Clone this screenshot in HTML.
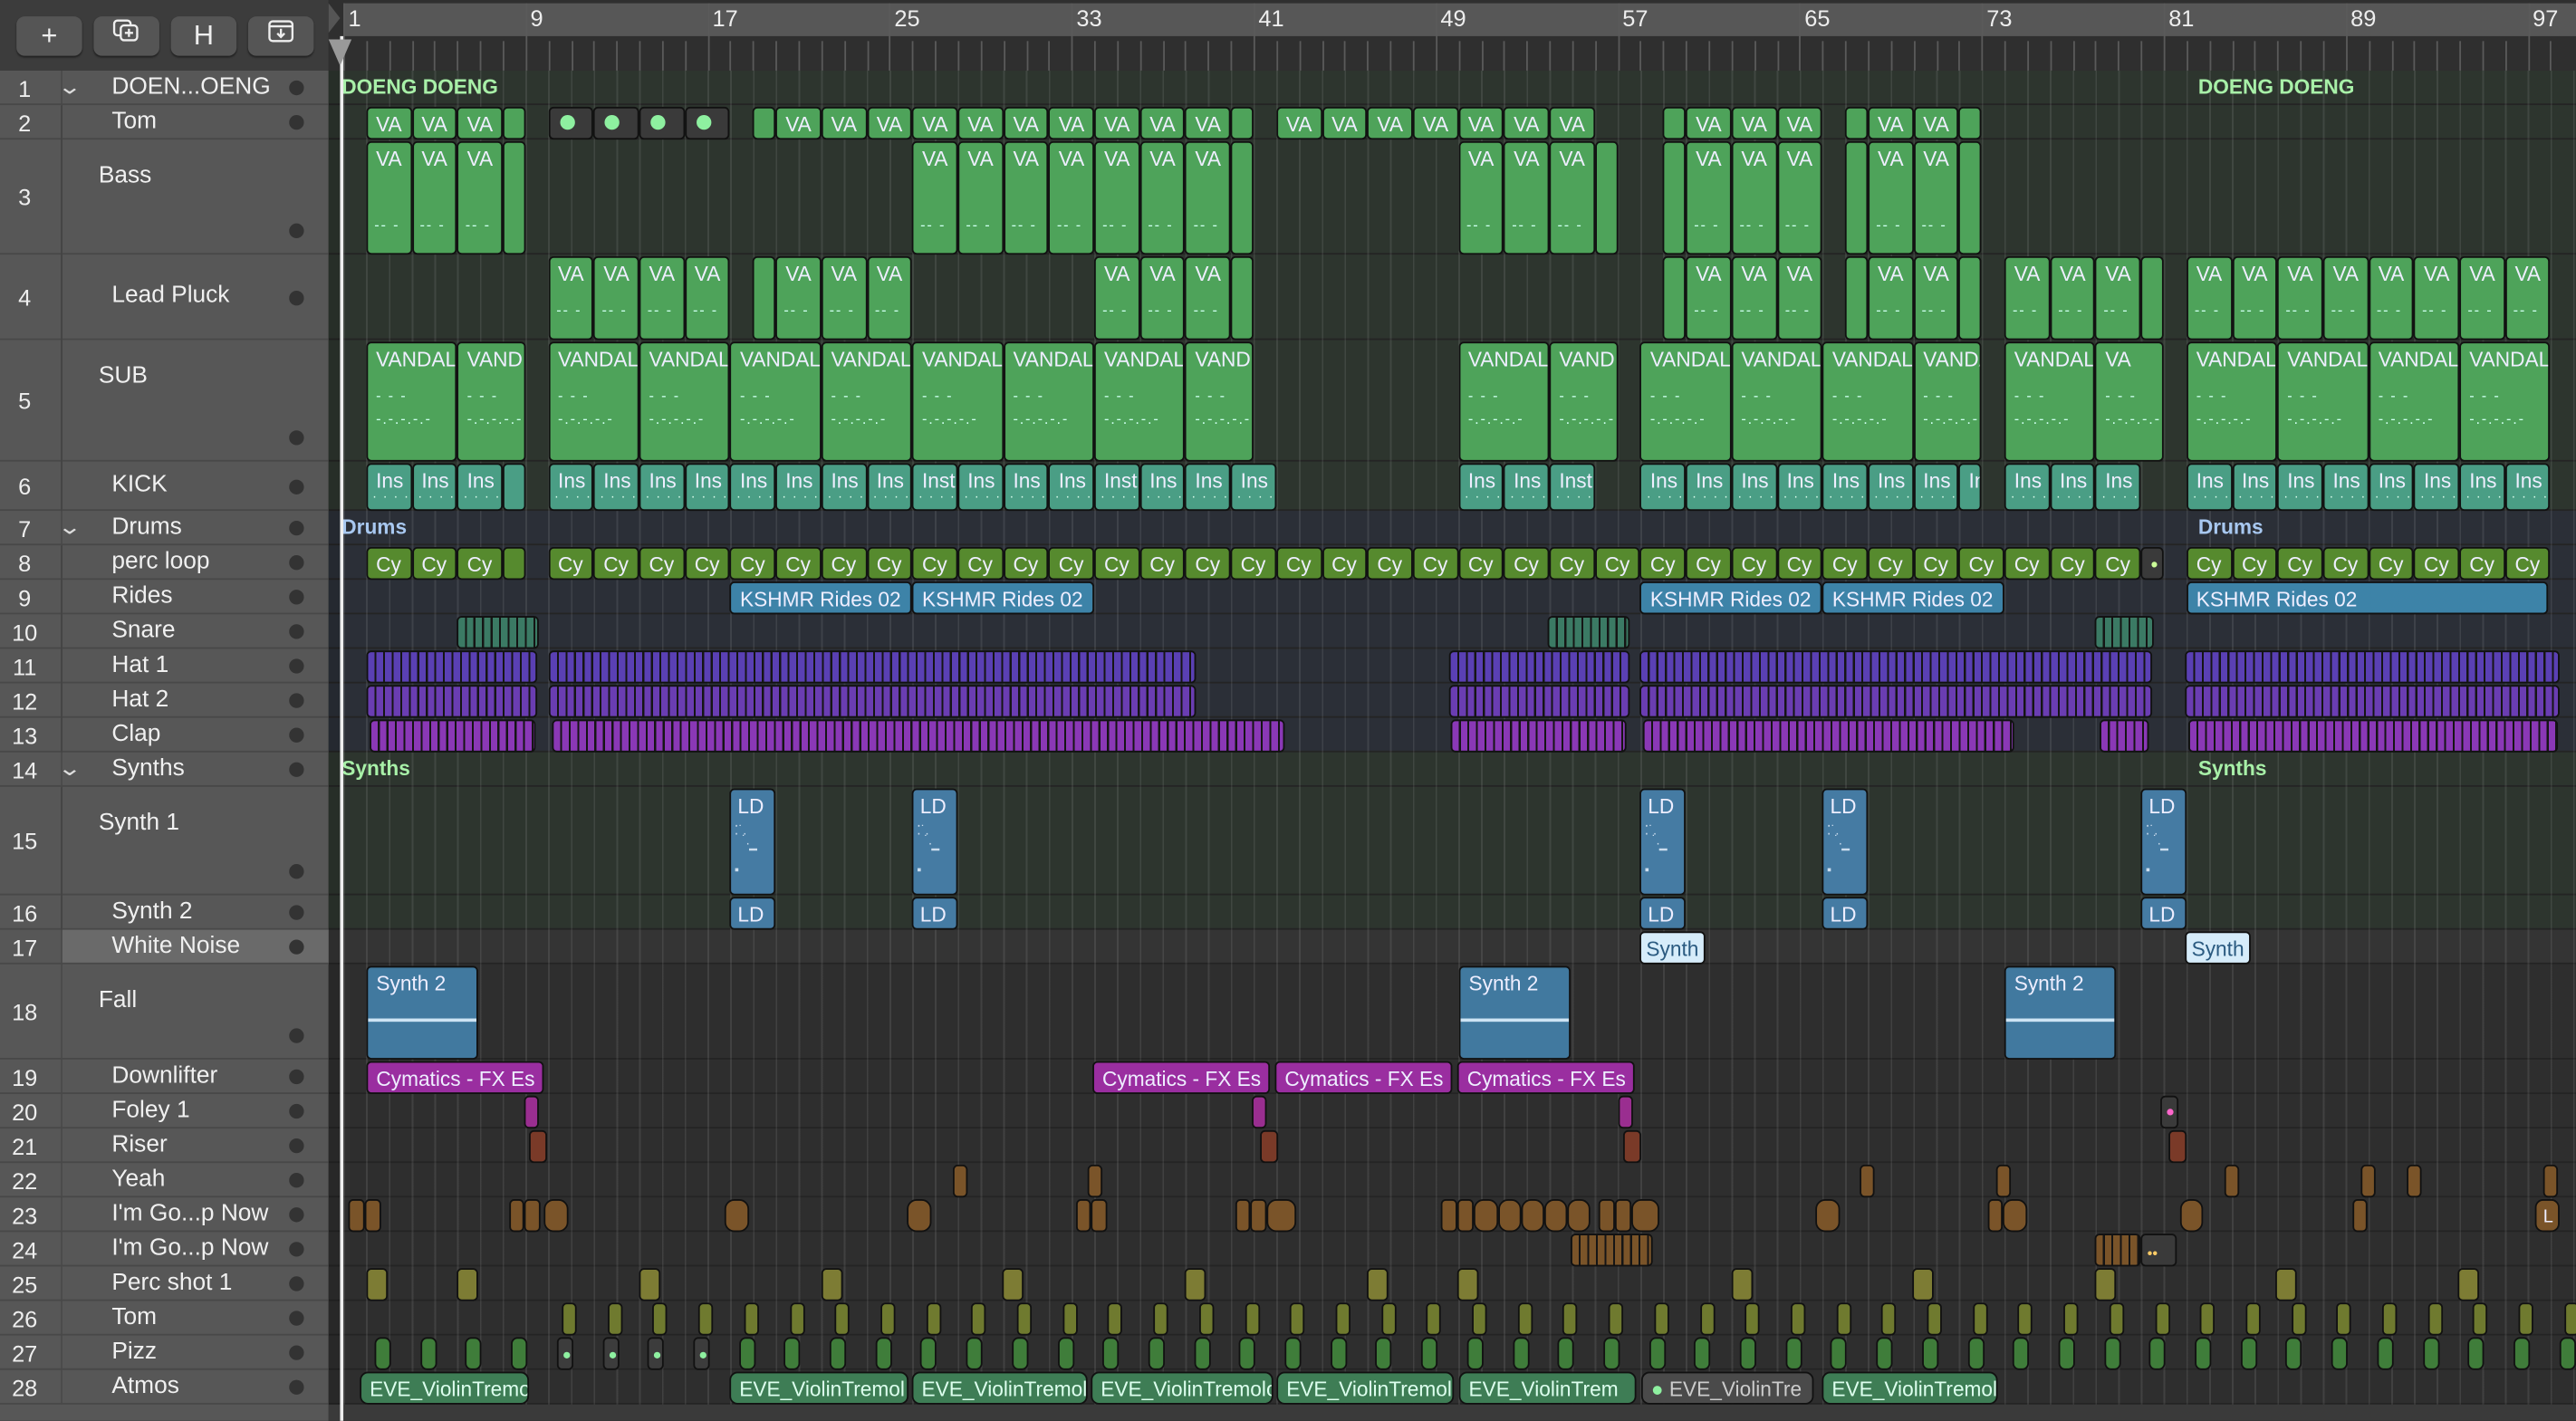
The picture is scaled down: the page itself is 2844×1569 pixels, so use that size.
<!DOCTYPE html>
<html><head><meta charset="utf-8">
<style>
html,body{margin:0;padding:0;background:#2c2c2c;width:2844px;height:1568px;overflow:hidden}
#s{position:absolute;left:0;top:0;width:1568px;height:865px;transform:scale(1.81378);transform-origin:0 0;background:#2c2c2c;font-family:"Liberation Sans",sans-serif;overflow:hidden}
.a{position:absolute;box-sizing:border-box}
.rg{position:absolute;box-sizing:border-box;border:1px solid #111;border-radius:3px;color:#eef;font-size:12.5px;line-height:14px;padding:3px 0 0 5px;overflow:hidden;white-space:nowrap}
.btn{position:absolute;top:10px;width:40px;height:24px;background:#555;border-radius:5px;box-shadow:0 1px 1px #222;color:#eee;text-align:center;font-size:17px;line-height:24px}
.num{position:absolute;left:0;width:30px;text-align:center;color:#eee;font-size:14px}
.nm{position:absolute;color:#f0f0f0;font-size:14.5px;white-space:nowrap}
.dot{position:absolute;left:176px;width:9px;height:9px;border-radius:50%;background:#333}
.gl{position:absolute;font-weight:bold;font-size:12.5px}
</style></head><body><div id="s"></div>
<script>
const S=document.getElementById('s');
const X=b=>209+(b-1)*13.85;
const rows=[null,[43,21],[64,21],[85,70],[155,52],[207,74],[281,30],[311,21],[332,21],[353,21],[374,21],[395,21],[416,21],[437,21],[458,21],[479,66],[545,21],[566,21],[587,58],[645,21],[666,21],[687,21],[708,21],[729,21],[750,21],[771,21],[792,21],[813,21],[834,21]];
function el(cls,st,html){const d=document.createElement('div');d.className=cls;d.style.cssText=st;if(html!==undefined)d.innerHTML=html;S.appendChild(d);return d;}
el('a','left:0;top:0;width:200px;height:43px;background:#3c3c3c');
el('btn','left:10px','+');
el('btn','left:57px','<svg width="18" height="16" viewBox="0 0 18 16"><rect x="1.5" y="1.5" width="10" height="9" rx="2" fill="none" stroke="#eee" stroke-width="1.3"/><rect x="5.5" y="4.5" width="10" height="9" rx="2" fill="#555" stroke="#eee" stroke-width="1.3"/><path d="M10.5 6.5v5M8 9h5" stroke="#eee" stroke-width="1.3"/></svg>');
el('btn','left:104px','H');
el('btn','left:151px','<svg width="18" height="16" viewBox="0 0 18 16"><rect x="2" y="2" width="14" height="12" rx="2" fill="none" stroke="#eee" stroke-width="1.3"/><path d="M2 5h14M9 6.5v5M6.8 9.3 9 11.5l2.2-2.2" fill="none" stroke="#eee" stroke-width="1.3"/></svg>');
el('a','left:200px;top:0;width:1368px;height:43px;background:#2f2f2f');
el('a','left:209px;top:2px;width:1359px;height:20px;background:#575757');
let rl='';
for(let b=1;b<=98;b++){const x=X(b)-200;rl+='<div class="a" style="left:'+x+'px;top:'+(((b-1)%8==0)?2:25)+'px;width:1px;height:'+(((b-1)%8==0)?41:18)+'px;background:#5a5a5a"></div>';}
el('a','left:200px;top:0;width:1368px;height:43px',rl);
[1,9,17,25,33,41,49,57,65,73,81,89,97].forEach(n=>el('a','left:'+(X(n)+3)+'px;top:3px;color:#eee;font-size:14px',String(n)));
el('a','left:200px;top:2px;width:0;height:0;border-top:9px solid transparent;border-bottom:9px solid transparent;border-left:7px solid #555');
el('a','left:0;top:43px;width:200px;height:822px;background:#575757');
el('a','left:37px;top:43px;width:1px;height:812px;background:#4a4a4a');
const tint={1:'#2d352e',2:'#2d352e',3:'#2d352e',4:'#2d352e',5:'#2d352e',6:'#2d352e',7:'#2b2f37',8:'#2b2f37',9:'#2b2f37',10:'#2b2f37',11:'#2b2f37',12:'#2b2f37',13:'#2b2f37',14:'#2d352e',15:'#2d352e',16:'#2d352e',17:'#343434'};
for(let i=1;i<=28;i++){const[t,h]=rows[i];el('a','left:200px;top:'+t+'px;width:1368px;height:'+h+'px;background:'+(tint[i]||'#2e2e2e')+';border-bottom:1px solid #242424');}
el('a','left:200px;top:855px;width:1368px;height:10px;background:#3a3a3a');
el('a','left:200px;top:43px;width:9px;height:812px;background:rgba(0,0,0,.12)');
el('a','left:'+X(1)+'px;top:43px;width:1359px;height:812px;background:repeating-linear-gradient(90deg,rgba(255,255,255,.09) 0 1px,transparent 1px 13.85px)');
const names={1:'DOEN...OENG',2:'Tom',3:'Bass',4:'Lead Pluck',5:'SUB',6:'KICK',7:'Drums',8:'perc loop',9:'Rides',10:'Snare',11:'Hat 1',12:'Hat 2',13:'Clap',14:'Synths',15:'Synth 1',16:'Synth 2',17:'White Noise',18:'Fall',19:'Downlifter',20:'Foley 1',21:'Riser',22:'Yeah',23:"I'm Go...p Now",24:"I'm Go...p Now",25:'Perc shot 1',26:'Tom',27:'Pizz',28:'Atmos'};
const tall={3:1,5:1,15:1,18:1};
for(let i=1;i<=28;i++){const[t,h]=rows[i];
 if(i==17)el('a','left:38px;top:'+t+'px;width:162px;height:'+h+'px;background:#6a6a6a');
 el('a','left:0;top:'+(t+h-1)+'px;width:200px;height:1px;background:#484848');
 el('num','top:'+(t+h/2-8)+'px',String(i));
 if(tall[i]){el('nm','left:60px;top:'+(t+14)+'px',names[i]);el('dot','top:'+(t+h-19)+'px');}
 else{el('nm','left:68px;top:'+(t+h/2-9)+'px',names[i]);el('dot','top:'+(t+h/2-4.5)+'px');}
 if(i==1||i==7||i==14)el('a','left:37px;top:'+(t+h/2-9)+'px;color:#ddd;font-size:13px;transform:scaleX(1.4)','&#8964;');
}
[[64,311],[332,458],[479,566]].forEach(([a,b])=>el('a','left:37px;top:'+a+'px;width:1px;height:'+(b-a)+'px;border-left:1px solid #444;border-top:1px solid #444;border-top-left-radius:8px;box-sizing:border-box'));
[['DOENG DOENG',1,'#a8f0a8'],['Drums',7,'#a8c8f0'],['Synths',14,'#a8f0a8']].forEach(([n,r,c])=>{const t=rows[r][0];el('gl','left:208px;top:'+(t+3)+'px;color:'+c,n);el('gl','left:1338px;top:'+(t+3)+'px;color:'+c,n);});
function P(r,x1,x2,bg,label,extra){const[t,h]=rows[r];return el('rg','left:'+x1+'px;top:'+(t+1)+'px;width:'+(x2-x1)+'px;height:'+(h-1)+'px;background:'+bg+';'+(extra||''),label||'');}
function B(r,b1,b2,bg,label,extra){return P(r,X(b1),X(b2),bg,label,extra);}
function C(r,b,n,len,bg,label,extra){for(let i=0;i<n;i++)B(r,b+i*len,b+(i+1)*len,bg,label,extra);}
const G='#4ea35a';
const dash='<div style="position:absolute;left:4px;bottom:10px;font-size:9px;color:#cfe;letter-spacing:1px">-- -</div>';
function CV(r,b,n,len,lab,ex){for(let i=0;i<n;i++)B(r,b+i*len,b+(i+1)*len,G,lab+(ex||''));}
CV(2,2,3,2,'VA');B(2,8,9,G);
[10,12,14,16].forEach(b=>B(2,b,b+2,'#3a3a3a','<div style="width:9px;height:9px;border-radius:50%;background:#8ef0a0;margin:1px 0 0 1px"></div>'));
B(2,19,20,G);CV(2,20,10,2,'VA');B(2,40,41,G);CV(2,42,7,2,'VA');B(2,59,60,G);CV(2,60,3,2,'VA');B(2,67,68,G);CV(2,68,2,2,'VA');B(2,72,73,G);
CV(3,2,3,2,'VA',dash);B(3,8,9,G);CV(3,26,7,2,'VA',dash);B(3,40,41,G);CV(3,50,3,2,'VA',dash);B(3,56,57,G);B(3,59,60,G);CV(3,60,3,2,'VA',dash);B(3,67,68,G);CV(3,68,2,2,'VA',dash);B(3,72,73,G);
CV(4,10,4,2,'VA',dash);B(4,19,20,G);CV(4,20,3,2,'VA',dash);CV(4,34,3,2,'VA',dash);B(4,40,41,G);B(4,59,60,G);CV(4,60,3,2,'VA',dash);B(4,67,68,G);CV(4,68,2,2,'VA',dash);B(4,72,73,G);CV(4,74,3,2,'VA',dash);B(4,80,81,G);CV(4,82,8,2,'VA',dash);
const vd='<div style="font-size:9px;color:#cfe;margin-top:8px;letter-spacing:1px">- - -<br>-.-.-.-.-</div>';
[[2,6,'VANDAL'],[6,9,'VAND'],[10,14,'VANDAL'],[14,18,'VANDAL'],[18,22,'VANDAL'],[22,26,'VANDAL'],[26,30,'VANDAL'],[30,34,'VANDAL'],[34,38,'VANDAL'],[38,41,'VAND'],[50,54,'VANDAL'],[54,57,'VAND'],[58,62,'VANDAL'],[62,66,'VANDAL'],[66,70,'VANDAL'],[70,73,'VANDA'],[74,78,'VANDAL'],[78,81,'VA'],[82,86,'VANDAL'],[86,90,'VANDAL'],[90,94,'VANDAL'],[94,98,'VANDALI']].forEach(([a,b,l])=>B(5,a,b,G,l+vd));
const T='#4a9e85';const idots='<div style="position:absolute;left:3px;bottom:2px;font-size:8px;color:#dfe;letter-spacing:1px">. . . .</div>';
C(6,2,3,2,T,'Ins'+idots);B(6,8,9,T);
for(let i=0;i<16;i++)B(6,10+i*2,12+i*2,T,(i==8||i==12?'Inst':'Ins')+idots);
C(6,50,2,2,T,'Ins'+idots);B(6,54,56,T,'Inst'+idots);C(6,58,7,2,T,'Ins'+idots);B(6,72,73,T,'In');C(6,74,3,2,T,'Ins'+idots);C(6,82,8,2,T,'Ins'+idots);
const O='#568a2e';C(8,2,3,2,O,'Cy');B(8,8,9,O);C(8,10,35,2,O,'Cy');B(8,80,81,'#3a3a3a','<span style="color:#cf9">•</span>');C(8,82,8,2,O,'Cy');
const KB='#3d83a8';[[18,26],[26,34],[58,66],[66,74],[82,97.9]].forEach(([a,b])=>B(9,a,b,KB,'KSHMR Rides 02'));
const st=c=>'repeating-linear-gradient(90deg,'+c+' 0 4px,#151515 4px 5.2px)';
[[278,328],[942,992],[1275,1311]].forEach(([a,b])=>P(10,a,b,st('#3b7a64')));
[[223,327],[334,728],[882,992],[998,1310],[1330,1558]].forEach(([a,b])=>{P(11,a,b,st('#5a40b4'));P(12,a,b,st('#6a3db2'));});
[[225,326],[336,782],[883,990],[1000,1226],[1278,1308],[1332,1557]].forEach(([a,b])=>P(13,a,b,st('#8a38b6')));
const LB='#457ba3';
const ldart='<div style="position:absolute;left:2px;top:22px;font-size:8px;line-height:6px;color:#cde">⁚˙.<br>&nbsp;&nbsp;˙.<br><span style="margin-left:9px">━</span><br><br>▪</div>';
[444,555,998,1109,1303].forEach(x=>{P(15,x,x+28,LB,'LD'+ldart,'padding-left:4px');P(16,x,x+28,LB,'LD','padding-left:4px');});
[998,1330].forEach(x=>P(17,x,x+40,'#d6ecfa','Synth','color:#2a5a80;padding-left:3px'));
[223,888,1220].forEach(x=>P(18,x,x+68,'#41799f','Synth 2<div style="position:absolute;left:0;right:0;top:31px;height:2px;background:#cde4f4"></div>'));
[[223,331],[665,773],[776,884],[887,995]].forEach(([a,b])=>P(19,a,b,'#9a2ea0','Cymatics - FX Es'));
[[319,328],[762,771],[985,994]].forEach(([a,b])=>P(20,a,b,'#9a2e90'));
P(20,1315,1326,'#3a3a3a','<div style="width:4px;height:4px;border-radius:50%;background:#f6c;margin:4px 0 0 -2px"></div>');
[[322,333],[767,778],[988,999],[1320,1331]].forEach(([a,b])=>P(21,a,b,'#7a3a28'));
const BR='#7a5429';
[580,662,1132,1215,1354,1437,1465,1548].forEach(x=>P(22,x,x+9,BR));
[[212,222],[222,232],[310,319],[319,329],[331,346],[441,456],[552,567],[655,664],[664,674],[752,761],[761,771],[771,789],[877,887],[887,897],[897,912],[912,926],[926,940],[940,954],[954,968],[973,983],[983,993],[993,1010],[1105,1120],[1210,1219],[1219,1234],[1327,1341],[1432,1441]].forEach(([a,b])=>P(23,a,b,BR,'',(b-a>12?'border-radius:6px;':'')));
P(23,1543,1558,BR,'L','padding:3px 0 0 4px;font-size:11px;border-radius:5px');
P(24,956,1006,st('#7a5429'));P(24,1275,1303,st('#7a5429'));P(24,1303,1325,'#3a3a3a','<span style="color:#fc6;font-size:9px">••</span>','padding-left:3px');
[223,278,389,500,610,721,832,887,1054,1164,1275,1385,1496].forEach(x=>P(25,x,x+13,'#7d7c34'));
for(let x=342;x<1562;x+=27.7)P(26,x,x+9,'#6f7a2f');
for(let i=0;i*27.7+228<1562;i++){const x=228+i*27.7;if(i>=4&&i<=7)P(27,x,x+10,'#3c3c3c','<div style="width:4px;height:4px;border-radius:50%;background:#8ef0a0;margin:5px 0 0 -2px"></div>');else P(27,x,x+10,'#3f7d3a','','border-radius:4px');}
const EV='#3e7d55';
[[219,322,'EVE_ViolinTremo'],[444,553,'EVE_ViolinTremol'],[555,662,'EVE_ViolinTremol'],[664,775,'EVE_ViolinTremolo'],[777,885,'EVE_ViolinTremol'],[888,996,'EVE_ViolinTrem'],[1109,1216,'EVE_ViolinTremol']].forEach(([a,b,l])=>P(28,a,b,EV,l,'border-radius:5px;color:#dfe'));
P(28,999,1104,'#4a4a4a','<span style="color:#8ef0a0">●</span> EVE_ViolinTre','border-radius:5px;color:#ccc');
el('a','left:207px;top:22px;width:1.5px;height:843px;background:#eee');
el('a','left:200px;top:24px;width:0;height:0;border-left:7.5px solid transparent;border-right:7.5px solid transparent;border-top:16px solid #999');
</script></body></html>
